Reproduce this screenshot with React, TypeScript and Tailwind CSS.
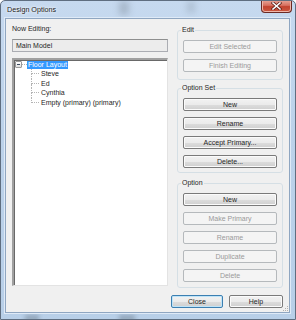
import React from 'react';

const font = "font-['Liberation_Sans',_Arial,_sans-serif]";

const Button: React.FC<{ label: string; disabled?: boolean; primary?: boolean; className?: string }> = ({
  label,
  disabled,
  primary,
  className = '',
}) => {
  if (disabled) {
    return (
      <div
        className={`h-[13px] flex items-center justify-center rounded-[2px] border border-[#b5b9bc] bg-[#f4f4f4] text-[#9a9a9a] ${className}`}
      >
        {label}
      </div>
    );
  }
  return (
    <div
      className={`h-[13px] flex items-center justify-center rounded-[2px] border ${
        primary ? 'border-[#3c7fb1] shadow-[inset_0_0_0_1px_#bfe4f8]' : 'border-[#7a7a7a] shadow-[inset_0_0_0_1px_#fbfbfb]'
      } bg-[linear-gradient(#f2f2f2_0%,#ebebeb_50%,#dddddd_51%,#cfcfcf_100%)] text-[#262626] ${className}`}
    >
      {label}
    </div>
  );
};

const Group: React.FC<{ title: string; className?: string; pb: string; children: React.ReactNode }> = ({
  title,
  className = '',
  pb,
  children,
}) => (
  <fieldset className={`border border-[#d5dfe5] rounded-[3px] ${className}`}>
    <legend className="ml-[3px] px-[1px] leading-[8px] text-[#262626]">{title}</legend>
    <div className={`flex flex-col gap-[6px] px-[5px] pt-[6px] ${pb}`}>{children}</div>
  </fieldset>
);

const ChildRow: React.FC<{ label: string; last?: boolean }> = ({ label, last }) => (
  <div className="h-[9.5px] flex items-stretch ml-[17px]">
    <div className="w-[8px] flex flex-col">
      <div className="flex-1 border-l border-b border-dotted border-[#b4b4b4]" />
      <div className={`flex-1 ${last ? '' : 'border-l border-dotted border-[#b4b4b4]'}`} />
    </div>
    <div className="ml-[1px] px-[1px] leading-[9.5px] text-[#262626] whitespace-nowrap">{label}</div>
  </div>
);

export default function App() {
  return (
    <div
      className={`${font} text-[7px] leading-[8px] w-[296px] h-[320px] relative overflow-hidden flex flex-col border border-[#5f6e80] rounded-t-[5px] bg-[linear-gradient(#c6d9ef,#bcd2ea_40%,#b8cfe8)]`}
    >
      {/* glass streaks */}
      <div className="absolute left-[118px] top-[0px] w-[10px] h-[14px] bg-[#7d8a99] opacity-40 blur-[3px]" />
      <div className="absolute left-[186px] top-[0px] w-[8px] h-[12px] bg-[#7d8a99] opacity-30 blur-[3px]" />
      <div className="absolute left-[24px] top-[314px] w-[14px] h-[6px] bg-[#5c6977] opacity-40 blur-[2px]" />
      <div className="absolute left-[118px] top-[314px] w-[16px] h-[6px] bg-[#5c6977] opacity-40 blur-[2px]" />

      {/* title bar */}
      <div className="h-[17px] flex items-start shrink-0 relative">
        <div className="pl-[6px] h-[17px] flex items-center text-[7.2px] text-[#1a1a1a] [text-shadow:0_0_4px_#ffffff,0_0_2px_#ffffff]">
          Design Options
        </div>
        <div className="ml-auto mr-[3px] -mt-[1px] w-[31px] h-[13px] rounded-b-[4px] border border-[#6b2a24] border-t-0 bg-[linear-gradient(#e9a99b_0%,#d7705f_45%,#c2432f_55%,#cc5a42_100%)] shadow-[inset_0_0_0_1px_#efb7aa] flex items-center justify-center">
          <svg width="11" height="8" viewBox="0 0 11 8">
            <path d="M2 1 L9 7 M9 1 L2 7" stroke="#5a1e18" strokeWidth="3" strokeLinecap="square" />
            <path d="M2 1 L9 7 M9 1 L2 7" stroke="#ffffff" strokeWidth="1.6" strokeLinecap="square" />
          </svg>
        </div>
      </div>

      {/* client area */}
      <div className="ml-[4px] w-[285px] h-[295px] shrink-0 bg-[#f0f0f0] border border-[#8fa6c1] shadow-[0_0_0_1px_#dfeaf7] flex flex-col relative">
        <div className="h-[269px] flex">
          {/* left column */}
          <div className="ml-[6px] w-[156px] flex flex-col">
            <div className="mt-[6px] h-[8px] text-[#262626]">Now Editing:</div>
            <div className="mt-[6px] h-[13px] border border-[#abadb3] border-t-[#8e8f8f] bg-[#ececec] flex items-center pl-[3px] text-[#262626]">
              Main Model
            </div>
            <div className="mt-[6px] h-[228px] bg-white border-l-2 border-t-2 border-l-[#a0a0a0] border-t-[#a0a0a0] border-r border-b border-r-[#e3e3e3] border-b-[#e3e3e3] shadow-[inset_1px_1px_0_#696969] flex flex-col">
              <div className="h-[9px] flex items-center pl-[1px]">
                <div className="w-[7px] h-[7px] border border-[#9a9a9a] rounded-[1px] bg-[linear-gradient(#ffffff,#e0e0e0)] flex items-center justify-center">
                  <div className="w-[3px] h-[1px] bg-[#3a4a5e]" />
                </div>
                <div className="w-[5px] border-b border-dotted border-[#b4b4b4]" />
                <div className="h-[8px] px-[1px] leading-[8px] bg-[#3399ff] text-white whitespace-nowrap">Floor Layout</div>
              </div>
              <ChildRow label="Steve" />
              <ChildRow label="Ed" />
              <ChildRow label="Cynthia" />
              <ChildRow label="Empty (primary) (primary)" last />
            </div>
          </div>

          {/* right column */}
          <div className="ml-[9px] w-[106px] pt-[7px] flex flex-col">
            <Group title="Edit" pb="pb-[7px]">
              <Button label="Edit Selected" disabled />
              <Button label="Finish Editing" disabled />
            </Group>
            <Group title="Option Set" className="mt-[4px]" pb="pb-[4px]">
              <Button label="New" />
              <Button label="Rename" />
              <Button label="Accept Primary..." />
              <Button label="Delete..." />
            </Group>
            <Group title="Option" className="mt-[6px]" pb="pb-[5px]">
              <Button label="New" />
              <Button label="Make Primary" disabled />
              <Button label="Rename" disabled />
              <Button label="Duplicate" disabled />
              <Button label="Delete" disabled />
            </Group>
          </div>
        </div>

        {/* bottom buttons */}
        <div className="mt-[7px] h-[17px] flex items-start justify-end">
          <Button label="Close" primary className="w-[52px]" />
          <Button label="Help" className="w-[54px] ml-[6px]" />
          <div className="self-end w-[6px] h-[6px]">
            <svg width="6" height="6" viewBox="0 0 6 6">
              <rect x="4" y="0" width="1" height="1" fill="#b0b0b0" />
              <rect x="2" y="2" width="1" height="1" fill="#b0b0b0" />
              <rect x="4" y="2" width="1" height="1" fill="#b0b0b0" />
              <rect x="0" y="4" width="1" height="1" fill="#b0b0b0" />
              <rect x="2" y="4" width="1" height="1" fill="#b0b0b0" />
              <rect x="4" y="4" width="1" height="1" fill="#b0b0b0" />
            </svg>
          </div>
        </div>
      </div>
    </div>
  );
}
